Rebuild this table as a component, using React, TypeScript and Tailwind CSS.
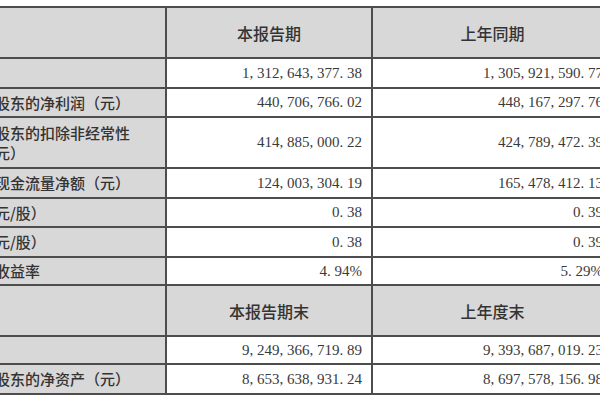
type Row = {
  label: React.ReactNode;
  cur: string;
  prev: string;
  h: string;
};

const CJK = "font-['Noto_Sans_CJK_SC',sans-serif]";
const NUM = "font-['Liberation_Serif','Noto_Sans_CJK_SC',serif]";

const firstBlock: Row[] = [
  { label: '营业收入（元）', cur: '1, 312, 643, 377. 38', prev: '1, 305, 921, 590. 77', h: 'h-[30px]' },
  { label: '归属于上市公司股东的净利润（元）', cur: '440, 706, 766. 02', prev: '448, 167, 297. 76', h: 'h-[29px]' },
  {
    label: (
      <>
        归属于上市公司股东的扣除非经常性
        <br />
        损益的净利润（元）
      </>
    ),
    cur: '414, 885, 000. 22',
    prev: '424, 789, 472. 39',
    h: 'h-[51px]',
  },
  { label: '经营活动产生的现金流量净额（元）', cur: '124, 003, 304. 19', prev: '165, 478, 412. 13', h: 'h-[30px]' },
  { label: '基本每股收益（元/股）', cur: '0. 38', prev: '0. 39', h: 'h-[29px]' },
  { label: '稀释每股收益（元/股）', cur: '0. 38', prev: '0. 39', h: 'h-[30px]' },
  { label: '加权平均净资产收益率', cur: '4. 94%', prev: '5. 29%', h: 'h-[28px]' },
];

const secondBlock: Row[] = [
  { label: '总资产（元）', cur: '9, 249, 366, 719. 89', prev: '9, 393, 687, 019. 23', h: 'h-[28px]' },
  { label: '归属于上市公司股东的净资产（元）', cur: '8, 653, 638, 931. 24', prev: '8, 697, 578, 156. 98', h: 'h-[30px]' },
];

const cell = 'border-2 border-[#4d4d4d] p-0';

function HeaderRow({ a, b }: { a: string; b: string }) {
  return (
    <tr className="h-[51px] bg-[#d8d8d8]">
      <td className={cell} />
      <td className={`${cell} text-center text-[16px] font-medium text-[#333] ${CJK}`}>{a}</td>
      <td className={`${cell} text-center text-[16px] font-medium text-[#333] ${CJK}`}>{b}</td>
    </tr>
  );
}

function DataRow({ row }: { row: Row }) {
  return (
    <tr className={row.h}>
      <td className={`${cell} bg-[#d8d8d8] pl-[5px] text-left text-[15px] leading-[20px] font-medium text-[#333] ${CJK}`}>
        {row.label}
      </td>
      <td className={`${cell} bg-white pr-[9px] text-right text-[15px] text-[#3a3a3a] ${NUM}`}>{row.cur}</td>
      <td className={`${cell} bg-white pr-[9px] text-right text-[15px] text-[#3a3a3a] ${NUM}`}>{row.prev}</td>
    </tr>
  );
}

export default function App() {
  return (
    <div className="h-[400px] w-[600px] overflow-hidden bg-white pt-[6px]">
      <table className="-ml-[117px] w-[729px] table-fixed border-collapse">
        <colgroup>
          <col className="w-[282px]" />
          <col className="w-[206px]" />
          <col className="w-[241px]" />
        </colgroup>
        <tbody>
          <HeaderRow a="本报告期" b="上年同期" />
          {firstBlock.map((r, i) => (
            <DataRow key={i} row={r} />
          ))}
          <HeaderRow a="本报告期末" b="上年度末" />
          {secondBlock.map((r, i) => (
            <DataRow key={i} row={r} />
          ))}
        </tbody>
      </table>
    </div>
  );
}
